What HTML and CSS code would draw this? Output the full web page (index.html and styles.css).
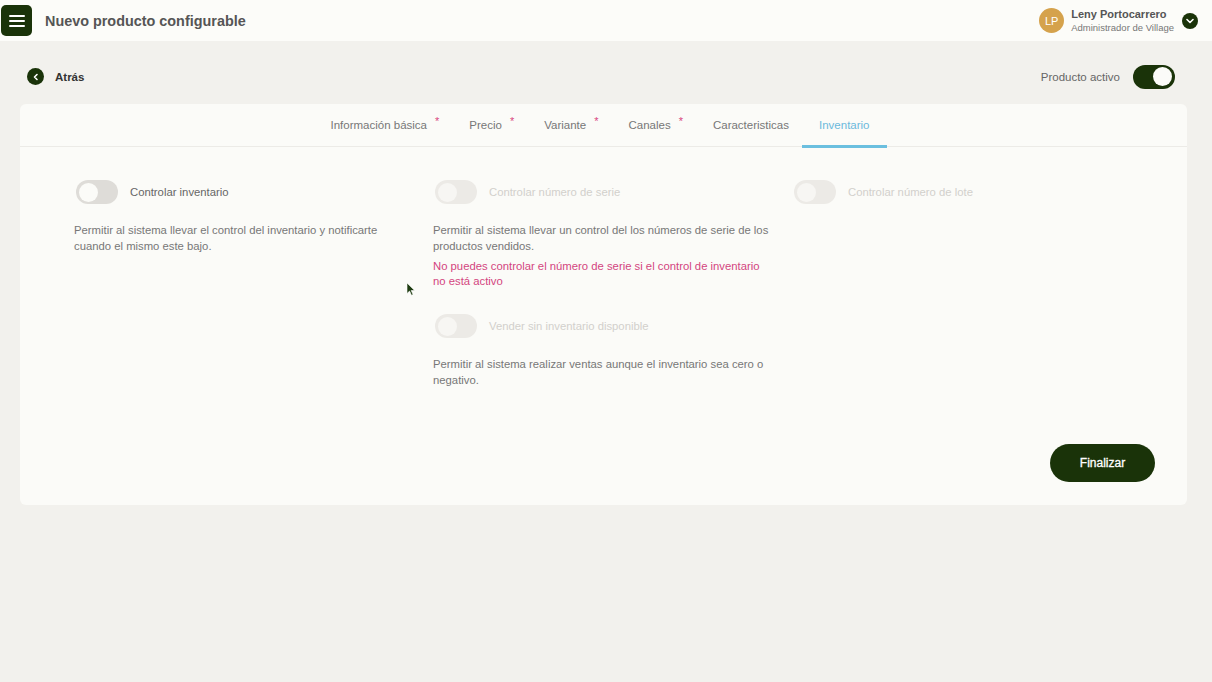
FILE: index.html
```html
<!DOCTYPE html>
<html lang="es">

<head>
    <meta charset="UTF-8">
    <title>Nuevo producto configurable</title>
    <link rel="stylesheet" href="styles.css">
</head>

<body>
    <header class="topbar">
        <div class="topbar-left">
            <button class="menu-btn">
                <svg width="16" height="14" viewBox="0 0 16 14"><path d="M1 2h14M1 7h14M1 12h14" stroke="#fff" stroke-width="2" stroke-linecap="round"/></svg>
            </button>
            <h1 class="title">Nuevo producto configurable</h1>
        </div>
        <div class="user">
            <div class="avatar">LP</div>
            <div class="user-info">
                <div class="user-name">Leny Portocarrero</div>
                <div class="user-role">Administrador de Village</div>
            </div>
            <div class="user-drop">
                <svg width="8" height="6" viewBox="0 0 8 6"><path d="M1 1.5l3 3 3-3" stroke="#fff" stroke-width="1.6" fill="none" stroke-linecap="round" stroke-linejoin="round"/></svg>
            </div>
        </div>
    </header>

    <div class="page">
        <div class="subbar">
            <a class="back" href="#">
                <span class="back-icon">
                    <svg width="8" height="8" viewBox="0 0 8 8"><path d="M5 1.5L2.5 4 5 6.5" stroke="#fff" stroke-width="1.6" fill="none" stroke-linecap="round" stroke-linejoin="round"/></svg>
                </span>
                Atrás
            </a>
            <div class="active-switch">
                <span>Producto activo</span>
                <span class="switch switch-on"><span class="knob"></span></span>
            </div>
        </div>

        <div class="card">
            <ul class="tabs">
                <li>Información básica<span class="req">*</span></li>
                <li>Precio<span class="req">*</span></li>
                <li>Variante<span class="req">*</span></li>
                <li>Canales<span class="req">*</span></li>
                <li>Caracteristicas</li>
                <li class="current">Inventario</li>
            </ul>

            <div class="options">
                <div class="option">
                    <div class="opt-head">
                        <span class="switch"><span class="knob"></span></span>
                        <span class="opt-label">Controlar inventario</span>
                    </div>
                    <p class="opt-desc">Permitir al sistema llevar el control del inventario y notificarte cuando el mismo este bajo.</p>
                </div>
                <div class="option">
                    <div class="opt-head disabled">
                        <span class="switch"><span class="knob"></span></span>
                        <span class="opt-label">Controlar número de serie</span>
                    </div>
                    <p class="opt-desc">Permitir al sistema llevar un control del los números de serie de los productos vendidos.</p>
                    <p class="opt-error">No puedes controlar el número de serie si el control de inventario no está activo</p>

                    <div class="opt-head disabled second">
                        <span class="switch"><span class="knob"></span></span>
                        <span class="opt-label">Vender sin inventario disponible</span>
                    </div>
                    <p class="opt-desc">Permitir al sistema realizar ventas aunque el inventario sea cero o negativo.</p>
                </div>
                <div class="option">
                    <div class="opt-head disabled">
                        <span class="switch"><span class="knob"></span></span>
                        <span class="opt-label">Controlar número de lote</span>
                    </div>
                </div>
            </div>

            <div class="card-foot">
                <button class="finish">Finalizar</button>
            </div>
        </div>
    </div>

    <svg class="cursor" width="10" height="14" viewBox="0 0 10 14"><path d="M1 1v10.5l2.6-2.4 1.9 4.2 1.6-.7-1.9-4.1H8.6z" fill="#1f3d12" stroke="#fff" stroke-width=".6"/></svg>
</body>

</html>
```

FILE: styles.css
```css
* {
    box-sizing: border-box;
}

body {
    margin: 0;
    background-color: #f2f1ed;
    font-family: "Liberation Sans", Arial, sans-serif;
    color: #555;
}

ul,
p,
h1 {
    margin: 0;
    padding: 0;
}

/* barra superior */
.topbar {
    height: 41px;
    background-color: #fcfcf9;
    display: flex;
    align-items: center;
    justify-content: space-between;
    padding: 0 14px 0 1px;
}

.topbar-left {
    display: flex;
    align-items: center;
}

.menu-btn {
    width: 31px;
    height: 31px;
    border: 0;
    border-radius: 5px;
    background-color: #1a3309;
    display: flex;
    align-items: center;
    justify-content: center;
    padding: 0;
}

.title {
    font-size: 14.4px;
    font-weight: bold;
    color: #555;
    margin-left: 13px;
}

.user {
    display: flex;
    align-items: center;
}

.avatar {
    width: 25px;
    height: 25px;
    border-radius: 50%;
    background-color: #d5a24c;
    color: #fff;
    font-size: 11px;
    display: flex;
    align-items: center;
    justify-content: center;
    margin-right: 7px;
    margin-left: -1px;
}

.user-name {
    font-size: 11px;
    font-weight: bold;
    color: #555;
    line-height: 14px;
}

.user-role {
    font-size: 9.5px;
    color: #777;
    line-height: 14px;
}

.user-drop {
    width: 16px;
    height: 16px;
    border-radius: 50%;
    background-color: #1a3309;
    display: flex;
    align-items: center;
    justify-content: center;
    margin-left: 8px;
}

/* contenido */
.page {
    padding: 0 25px 0 20px;
}

.subbar {
    height: 63px;
    display: flex;
    align-items: center;
    justify-content: space-between;
    padding: 8px 12px 0 7px;
}

.back {
    display: flex;
    align-items: center;
    font-size: 11.5px;
    font-weight: bold;
    color: #333;
    text-decoration: none;
}

.back-icon {
    width: 17px;
    height: 17px;
    border-radius: 50%;
    background-color: #1a3309;
    display: flex;
    align-items: center;
    justify-content: center;
    margin-right: 11px;
}

.active-switch {
    display: flex;
    align-items: center;
    font-size: 11.5px;
    color: #666;
}

.active-switch .switch {
    margin-left: 13px;
}

.switch {
    width: 42px;
    height: 24px;
    border-radius: 12px;
    background-color: #dedcd8;
    display: inline-flex;
    align-items: center;
    padding: 0 3px;
    flex-shrink: 0;
}

.knob {
    width: 19px;
    height: 19px;
    border-radius: 50%;
    background-color: #fbfbf8;
}

.switch-on {
    background-color: #1a3309;
    justify-content: flex-end;
}

.card {
    background-color: #fbfbf8;
    border-radius: 6px;
    padding-bottom: 23px;
}

.tabs {
    list-style: none;
    display: flex;
    justify-content: center;
    border-bottom: 1px solid #ecebe7;
    height: 43px;
    padding-right: 5px;
}

.tabs li {
    font-size: 11.5px;
    color: #777;
    padding: 0 15px;
    display: flex;
    align-items: center;
    border-bottom: 3px solid transparent;
    margin-bottom: -2px;
}

.tabs li .req {
    color: #d9477f;
    font-size: 11px;
    margin-left: 8px;
    position: relative;
    top: -4px;
}

.tabs li.current {
    color: #6bb9dc;
    border-bottom-color: #6bbfdf;
    padding: 0 17px;
    margin-left: -2px;
}

.options {
    display: grid;
    grid-template-columns: repeat(3, 337px);
    column-gap: 22px;
    padding: 33px 0 0 54px;
    min-height: 297px;
}

.opt-head {
    display: flex;
    align-items: center;
    height: 24px;
    padding-left: 2px;
}

.opt-label {
    font-size: 11.3px;
    color: #666;
    margin-left: 12px;
}

.opt-head.disabled .switch {
    background-color: #eceae6;
}

.opt-head.disabled .knob {
    background-color: #f7f6f3;
}

.opt-head.disabled .opt-label {
    color: #d2d0cc;
}

.opt-head.second {
    margin-top: 25px;
}

.opt-desc {
    font-size: 11.3px;
    line-height: 16px;
    color: #777;
    margin-top: 18px;
}

.opt-error {
    font-size: 11.3px;
    line-height: 15px;
    color: #d3457f;
    margin-top: 5px;
}

.card-foot {
    display: flex;
    justify-content: flex-end;
    padding-right: 32px;
}

.finish {
    width: 105px;
    height: 38px;
    border: 0;
    border-radius: 19px;
    background-color: #1a3309;
    color: #fff;
    font-family: "Liberation Sans", Arial, sans-serif;
    font-size: 12px;
    font-weight: normal;
    -webkit-text-stroke: 0.3px #fff;
}

.cursor {
    position: absolute;
    left: 406px;
    top: 282px;
}
```
